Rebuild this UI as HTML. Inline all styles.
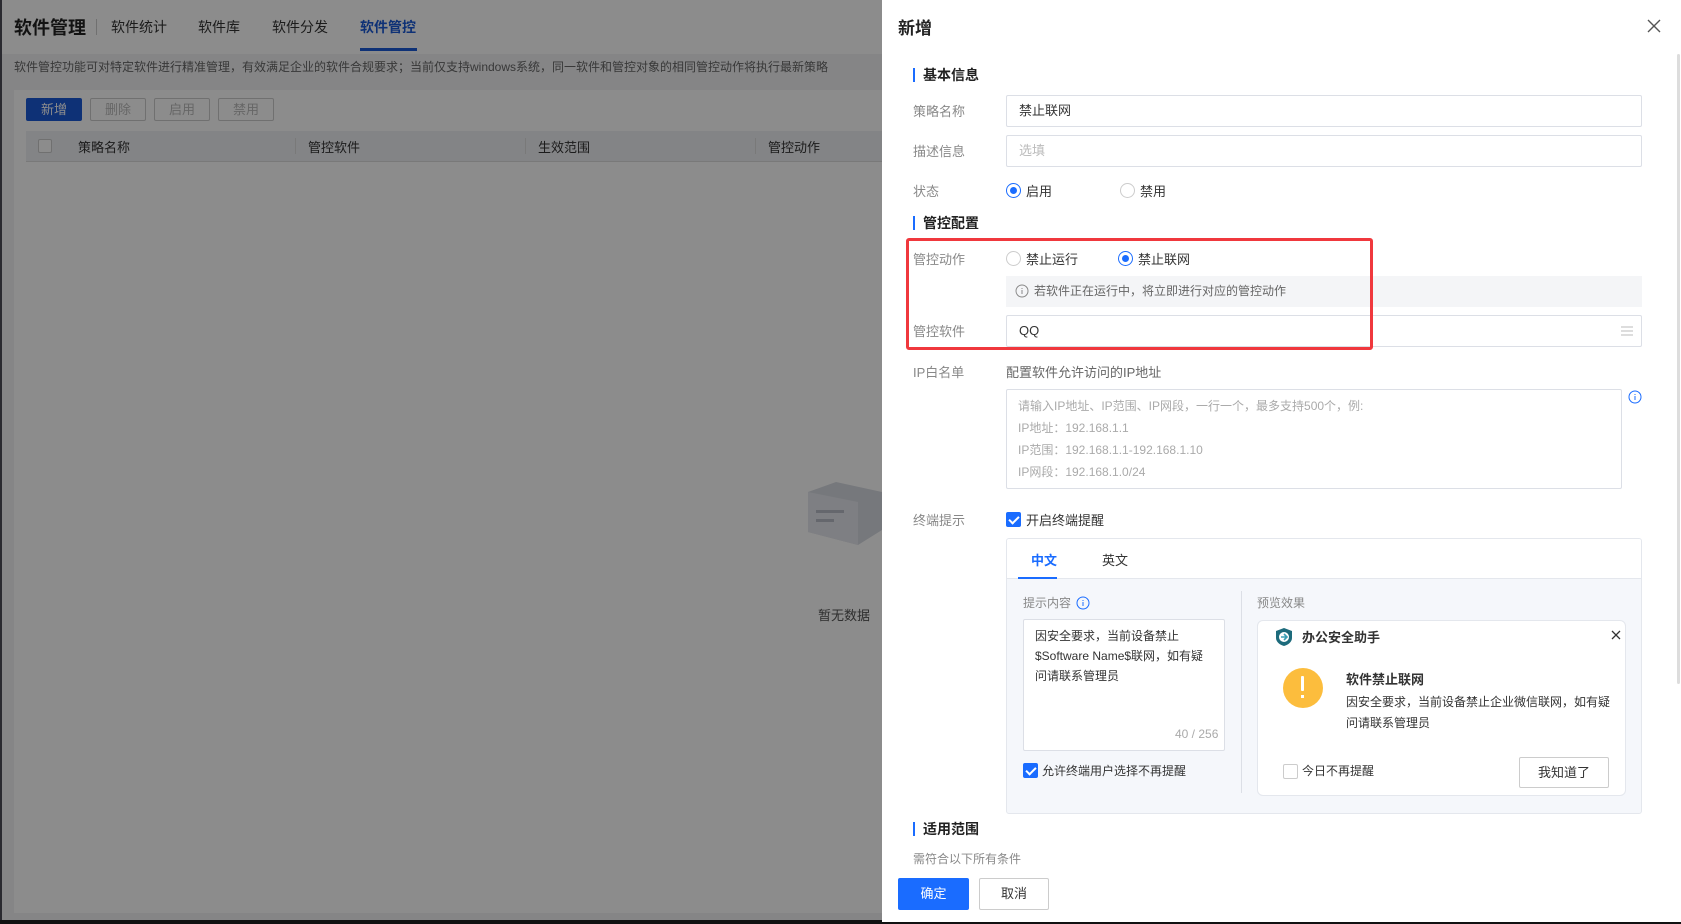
<!DOCTYPE html>
<html><head><meta charset="utf-8"><style>
*{box-sizing:border-box;margin:0;padding:0}
body{width:1681px;height:924px;overflow:hidden;position:relative;font-family:"Liberation Sans","Noto Sans CJK SC",sans-serif;font-size:13px;color:#333;background:#fff}
.a{position:absolute;white-space:nowrap}
.left{position:absolute;left:0;top:0;width:882px;height:924px;background:#f2f3f5}
.ov{position:absolute;left:0;top:0;width:882px;height:924px;background:rgba(0,0,0,.45)}
.dr{position:absolute;left:882px;top:0;width:799px;height:922px;background:#fff}
.lbl{position:absolute;left:31px;color:#888;font-size:13px}
.inp{position:absolute;left:124px;width:636px;height:32px;border:1px solid #dcdfe6;border-radius:2px;padding-left:12px;line-height:30px;font-size:13px}
.sec{position:absolute;left:31px;font-size:14px;font-weight:bold;color:#222;padding-left:8px;border-left:2px solid #1a6cff;line-height:14px}
.rad{position:absolute;width:15px;height:15px;border-radius:50%;border:1px solid #ccc;background:#fff}
.rad.on{border-color:#1a6cff}
.rad.on:after{content:"";position:absolute;left:3px;top:3px;width:7px;height:7px;border-radius:50%;background:#1a6cff}
.cb{position:absolute;width:15px;height:15px;border-radius:2px;background:#1a6cff}
.cb:after{content:"";position:absolute;left:5px;top:2px;width:4px;height:8px;border:solid #fff;border-width:0 2px 2px 0;transform:rotate(45deg)}
</style></head><body>
<div class="left">
  <div style="position:absolute;left:0;top:0;width:882px;height:3px;background:#fff"></div>
  <div style="position:absolute;left:0;top:3px;width:882px;height:51px;background:#fff"></div>
  <div class="a" style="left:14px;top:14px;font-size:18px;font-weight:bold;color:#222">软件管理</div>
  <div style="position:absolute;left:96px;top:19px;width:1px;height:16px;background:#ccc"></div>
  <div class="a" style="left:111px;top:17px;font-size:14px">软件统计</div>
  <div class="a" style="left:198px;top:17px;font-size:14px">软件库</div>
  <div class="a" style="left:272px;top:17px;font-size:14px">软件分发</div>
  <div class="a" style="left:360px;top:17px;font-size:14px;color:#1a5ad8;font-weight:bold">软件管控</div>
  <div style="position:absolute;left:360px;top:48px;width:57px;height:3px;background:#1a5ad8"></div>
  <div class="a" style="left:14px;top:58px;font-size:12px;color:#666">软件管控功能可对特定软件进行精准管理，有效满足企业的软件合规要求；当前仅支持windows系统，同一软件和管控对象的相同管控动作将执行最新策略</div>
  <div style="position:absolute;left:14px;top:90px;width:868px;height:823px;background:#fff"></div>
  <div class="a" style="left:26px;top:98px;width:56px;height:23px;background:#1a5ad8;color:#fff;border-radius:2px;text-align:center;line-height:23px">新增</div>
  <div class="a" style="left:90px;top:98px;width:56px;height:23px;border:1px solid #ccc;color:#bbb;border-radius:2px;text-align:center;line-height:21px">删除</div>
  <div class="a" style="left:154px;top:98px;width:56px;height:23px;border:1px solid #ccc;color:#bbb;border-radius:2px;text-align:center;line-height:21px">启用</div>
  <div class="a" style="left:218px;top:98px;width:56px;height:23px;border:1px solid #ccc;color:#bbb;border-radius:2px;text-align:center;line-height:21px">禁用</div>
  <div style="position:absolute;left:26px;top:131px;width:856px;height:31px;background:#eef0f4;border-bottom:1px solid #ddd"></div>
  <div style="position:absolute;left:38px;top:139px;width:14px;height:14px;border:1px solid #ccc;background:#fff;border-radius:2px"></div>
  <div class="a" style="left:78px;top:137px">策略名称</div>
  <div class="a" style="left:308px;top:137px">管控软件</div>
  <div class="a" style="left:538px;top:137px">生效范围</div>
  <div class="a" style="left:768px;top:137px">管控动作</div>
  <div style="position:absolute;left:295px;top:138px;width:1px;height:16px;background:#ddd"></div>
  <div style="position:absolute;left:525px;top:138px;width:1px;height:16px;background:#ddd"></div>
  <div style="position:absolute;left:755px;top:138px;width:1px;height:16px;background:#ddd"></div>
  <svg class="a" style="left:800px;top:480px" width="82" height="80"><polygon points="8,12 36,2 82,12 82,50 58,65 8,52" fill="#d8dbe2"/><polygon points="8,12 58,22 58,65 8,52" fill="#e6e8ee"/><rect x="16" y="30" width="28" height="3" fill="#b8bcc6"/><rect x="16" y="39" width="18" height="3" fill="#b8bcc6"/></svg>
  <div class="a" style="left:818px;top:605px;color:#555">暂无数据</div>
</div>
<div class="ov"></div>
<div style="position:absolute;left:0;top:0;width:2px;height:924px;background:#2a2a30"></div>
<div style="position:absolute;left:0;top:920px;width:1681px;height:4px;background:#111"></div>
<div class="dr">
  <div class="a" style="left:16px;top:14px;font-size:17px;font-weight:bold;color:#222">新增</div>
  <svg class="a" style="left:765px;top:19px" width="14" height="14"><path d="M1 1L13 13M13 1L1 13" stroke="#555" stroke-width="1.4"/></svg>
  <div style="position:absolute;left:795px;top:54px;width:3px;height:630px;background:#ddd;border-radius:2px"></div>
  <div class="sec" style="top:68px">基本信息</div>
  <div class="lbl" style="top:101px">策略名称</div>
  <div class="inp" style="top:95px">禁止联网</div>
  <div class="lbl" style="top:141px">描述信息</div>
  <div class="inp" style="top:135px;color:#bbb">选填</div>
  <div class="lbl" style="top:181px">状态</div>
  <div class="rad on" style="left:124px;top:183px"></div><div class="a" style="left:144px;top:181px">启用</div>
  <div class="rad" style="left:238px;top:183px"></div><div class="a" style="left:258px;top:181px">禁用</div>
  <div class="sec" style="top:216px">管控配置</div>
  <div class="lbl" style="top:249px">管控动作</div>
  <div class="rad" style="left:124px;top:251px"></div><div class="a" style="left:144px;top:249px">禁止运行</div>
  <div class="rad on" style="left:236px;top:251px"></div><div class="a" style="left:256px;top:249px">禁止联网</div>
  <div style="position:absolute;left:124px;top:276px;width:636px;height:31px;background:#f4f5f7"></div>
  <svg class="a" style="left:133px;top:284px" width="14" height="14"><circle cx="7" cy="7" r="6" fill="none" stroke="#888"/><path d="M7 6v4M7 4v1" stroke="#888"/></svg>
  <div class="a" style="left:152px;top:282px;font-size:12px;color:#666">若软件正在运行中，将立即进行对应的管控动作</div>
  <div class="lbl" style="top:321px">管控软件</div>
  <div class="inp" style="top:315px;height:32px">QQ</div>
  <svg class="a" style="left:739px;top:325px" width="12" height="12"><path d="M0 2h12M0 6h12M0 10h12" stroke="#bbb"/></svg>
  <div style="position:absolute;left:24px;top:238px;width:467px;height:112px;border:3px solid #f0383d;border-radius:3px"></div>
  <div class="lbl" style="top:362px">IP白名单</div>
  <div class="a" style="left:124px;top:362px;color:#666">配置软件允许访问的IP地址</div>
  <div style="position:absolute;left:124px;top:389px;width:616px;height:100px;border:1px solid #dcdfe6;border-radius:2px"></div>
  <div class="a" style="left:136px;top:395px;font-size:12px;color:#aaa;line-height:22px">请输入IP地址、IP范围、IP网段，一行一个，最多支持500个，例:<br>IP地址：192.168.1.1<br>IP范围：192.168.1.1-192.168.1.10<br>IP网段：192.168.1.0/24</div>
  <svg class="a" style="left:746px;top:390px" width="14" height="14"><circle cx="7" cy="7" r="6" fill="none" stroke="#1a6cff"/><path d="M7 6v4M7 4v1" stroke="#1a6cff"/></svg>
  <div class="lbl" style="top:510px">终端提示</div>
  <div class="cb" style="left:124px;top:512px"></div><div class="a" style="left:144px;top:510px">开启终端提醒</div>
  <div style="position:absolute;left:124px;top:538px;width:636px;height:276px;border:1px solid #e4e7ed;border-radius:3px;background:#f5f7fb;overflow:hidden">
    <div style="position:absolute;left:0;top:0;width:636px;height:40px;background:#fff;border-bottom:1px solid #e4e7ed"></div>
    <div class="a" style="left:24px;top:11px;color:#1a6cff;font-weight:bold">中文</div>
    <div style="position:absolute;left:11px;top:38px;width:39px;height:2px;background:#1a6cff"></div>
    <div class="a" style="left:95px;top:11px">英文</div>
    <div class="a" style="left:16px;top:55px;color:#888;font-size:12px">提示内容</div>
    <svg class="a" style="left:69px;top:57px" width="14" height="14"><circle cx="7" cy="7" r="6" fill="none" stroke="#1a6cff"/><path d="M7 6v4M7 4v1" stroke="#1a6cff"/></svg>
    <div style="position:absolute;left:16px;top:80px;width:202px;height:132px;background:#fff;border:1px solid #dcdfe6;border-radius:2px"></div>
    <div class="a" style="left:28px;top:87px;font-size:12px;line-height:20px">因安全要求，当前设备禁止<br>$Software Name$联网，如有疑<br>问请联系管理员</div>
    <div class="a" style="left:168px;top:188px;font-size:12px;color:#aaa">40 / 256</div>
    <div class="cb" style="left:16px;top:224px"></div><div class="a" style="left:35px;top:223px;font-size:12px">允许终端用户选择不再提醒</div>
    <div style="position:absolute;left:234px;top:52px;width:1px;height:202px;background:#dcdfe6"></div>
    <div class="a" style="left:250px;top:55px;color:#888;font-size:12px">预览效果</div>
    <div style="position:absolute;left:250px;top:81px;width:369px;height:176px;background:#fff;border:1px solid #e4e7ed;border-radius:6px">
      <svg class="a" style="left:17px;top:6px" width="18" height="20"><path d="M9 1L17 4V11C17 15 13 18 9 19C5 18 1 15 1 11V4Z" fill="#1d6b7c"/><circle cx="9" cy="10" r="5" fill="#fff"/><path d="M6 10h6M9 7l3 3-3 3" stroke="#3a9fb5" stroke-width="1.6" fill="none"/></svg>
      <div class="a" style="left:44px;top:6px;font-weight:bold;font-size:13px">办公安全助手</div>
      <svg class="a" style="left:353px;top:9px" width="10" height="10"><path d="M1 1L9 9M9 1L1 9" stroke="#333" stroke-width="1.3"/></svg>
      <div class="a" style="left:25px;top:47px;width:40px;height:40px;border-radius:50%;background:#fcbd3d"></div>
      <div class="a" style="left:43px;top:55px;width:3px;height:15px;background:#fff;border-radius:1px"></div>
      <div class="a" style="left:43px;top:74px;width:3px;height:3px;background:#fff"></div>
      <div class="a" style="left:88px;top:48px;font-weight:bold;font-size:13px">软件禁止联网</div>
      <div class="a" style="left:88px;top:71px;font-size:12px;line-height:21px">因安全要求，当前设备禁止企业微信联网，如有疑<br>问请联系管理员</div>
      <div class="a" style="left:25px;top:143px;width:15px;height:15px;border:1px solid #ccc;border-radius:2px"></div>
      <div class="a" style="left:44px;top:141px;font-size:12px">今日不再提醒</div>
      <div class="a" style="left:261px;top:136px;width:90px;height:31px;border:1px solid #ccc;border-radius:2px;text-align:center;line-height:29px">我知道了</div>
    </div>
  </div>
  <div class="sec" style="top:822px">适用范围</div>
  <div class="a" style="left:31px;top:850px;font-size:12px;color:#888">需符合以下所有条件</div>
  <div class="a" style="left:16px;top:878px;width:71px;height:32px;background:#1a6cff;color:#fff;border-radius:2px;text-align:center;line-height:32px">确定</div>
  <div class="a" style="left:97px;top:878px;width:70px;height:32px;border:1px solid #ccc;border-radius:2px;text-align:center;line-height:30px">取消</div>
</div>
</body></html>
